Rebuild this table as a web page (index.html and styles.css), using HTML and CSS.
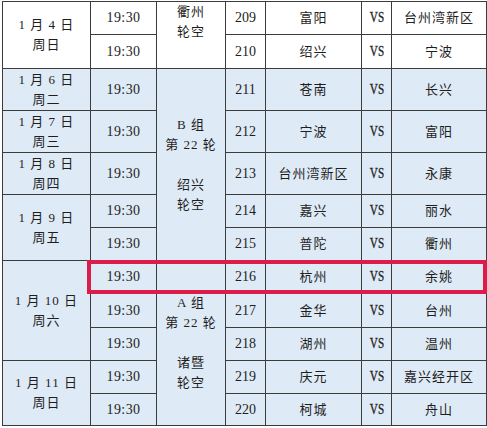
FILE: index.html
```html
<!DOCTYPE html>
<html lang="zh">
<head>
<meta charset="utf-8">
<link rel="stylesheet" href="styles.css">
</head>
<body>
<div class="wrap">
<table class="sched">
<colgroup>
<col class="c1"><col class="c2"><col class="c3"><col class="c4"><col class="c5"><col class="c6"><col class="c7">
</colgroup>
<tbody>
<tr class="white h33">
  <td rowspan="2" class="cn">1 月 4 日<br>周日</td>
  <td class="time">19:30</td>
  <td rowspan="2" class="cn top">衢州<br>轮空</td>
  <td>209</td>
  <td class="cn">富阳</td>
  <td><span class="vs">VS</span></td>
  <td class="cn">台州湾新区</td>
</tr>
<tr class="white h34">
  <td class="time">19:30</td>
  <td>210</td>
  <td class="cn">绍兴</td>
  <td><span class="vs">VS</span></td>
  <td class="cn">宁波</td>
</tr>
<tr class="h42">
  <td class="cn">1 月 6 日<br>周二</td>
  <td class="time">19:30</td>
  <td rowspan="5" class="cn">B 组<br>第 22 轮<br><br>绍兴<br>轮空</td>
  <td>211</td>
  <td class="cn">苍南</td>
  <td><span class="vs">VS</span></td>
  <td class="cn">长兴</td>
</tr>
<tr class="h42">
  <td class="cn">1 月 7 日<br>周三</td>
  <td class="time">19:30</td>
  <td>212</td>
  <td class="cn">宁波</td>
  <td><span class="vs">VS</span></td>
  <td class="cn">富阳</td>
</tr>
<tr class="h42">
  <td class="cn">1 月 8 日<br>周四</td>
  <td class="time">19:30</td>
  <td>213</td>
  <td class="cn">台州湾新区</td>
  <td><span class="vs">VS</span></td>
  <td class="cn">永康</td>
</tr>
<tr class="h33">
  <td rowspan="2" class="cn">1 月 9 日<br>周五</td>
  <td class="time">19:30</td>
  <td>214</td>
  <td class="cn">嘉兴</td>
  <td><span class="vs">VS</span></td>
  <td class="cn">丽水</td>
</tr>
<tr class="h33">
  <td class="time">19:30</td>
  <td>215</td>
  <td class="cn">普陀</td>
  <td><span class="vs">VS</span></td>
  <td class="cn">衢州</td>
</tr>
<tr class="h33">
  <td rowspan="3" class="cn">1 月 10 日<br>周六</td>
  <td class="time">19:30</td>
  <td rowspan="5" class="cn">A 组<br>第 22 轮<br><br>诸暨<br>轮空</td>
  <td>216</td>
  <td class="cn">杭州</td>
  <td><span class="vs">VS</span></td>
  <td class="cn">余姚</td>
</tr>
<tr class="h34">
  <td class="time">19:30</td>
  <td>217</td>
  <td class="cn">金华</td>
  <td><span class="vs">VS</span></td>
  <td class="cn">台州</td>
</tr>
<tr class="h33">
  <td class="time">19:30</td>
  <td>218</td>
  <td class="cn">湖州</td>
  <td><span class="vs">VS</span></td>
  <td class="cn">温州</td>
</tr>
<tr class="h33">
  <td rowspan="2" class="cn">1 月 11 日<br>周日</td>
  <td class="time">19:30</td>
  <td>219</td>
  <td class="cn">庆元</td>
  <td><span class="vs">VS</span></td>
  <td class="cn">嘉兴经开区</td>
</tr>
<tr class="h32">
  <td class="time">19:30</td>
  <td>220</td>
  <td class="cn">柯城</td>
  <td><span class="vs">VS</span></td>
  <td class="cn">舟山</td>
</tr>
</tbody>
</table>
<div class="highlight"></div>
</div>
</body>
</html>
```
FILE: styles.css
```css
html, body {
  margin: 0;
  padding: 0;
  background: #ffffff;
}
.wrap {
  position: relative;
  width: 487px;
  height: 428px;
  padding: 1px 0 0 2px;
  box-sizing: border-box;
}
.sched {
  border-collapse: collapse;
  table-layout: fixed;
  width: 485px;
  font-family: "Liberation Serif", "Noto Sans CJK SC", serif;
  font-size: 14px;
  color: #1e1e1e;
  background: #deeaf6;
}
.sched td {
  border: 1px solid #3c3c3c;
  padding: 0;
  text-align: center;
  vertical-align: middle;
  line-height: 20px;
}
.c1 { width: 88px; }
.c2 { width: 66px; }
.c3 { width: 69px; }
.c4 { width: 40px; }
.c5 { width: 96px; }
.c6 { width: 30px; }
.c7 { width: 95px; }
.h32 { height: 32px; }
.h33 { height: 33px; }
.h34 { height: 34px; }
.h42 { height: 42px; }
.white td { background: #ffffff; }
.sched td.top { vertical-align: top; }
.cn {
  font-size: 13px;
  letter-spacing: 1px;
}
.time {
  letter-spacing: 0.4px;
}
.vs {
  display: inline-block;
  transform: scaleX(0.8);
  letter-spacing: 0;
  -webkit-text-stroke: 0.3px #1e1e1e;
}
.highlight {
  position: absolute;
  left: 87px;
  top: 260px;
  width: 400px;
  height: 34px;
  box-sizing: border-box;
  border: 4px solid #dc1d4a;
}
```
